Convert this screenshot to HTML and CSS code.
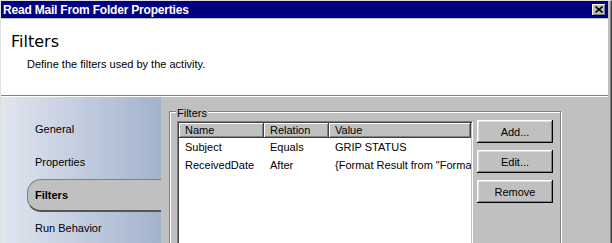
FILE: index.html
```html
<!DOCTYPE html>
<html lang="en">
<head>
  <meta charset="UTF-8">
  <title>Read Mail From Folder Properties</title>
  <link rel="stylesheet" href="styles.css">
</head>
<body>
  <div class="window">
    <div class="titlebar">
      <span class="title">Read Mail From Folder Properties</span>
      <button class="close" type="button" aria-label="Close">
        <svg width="8" height="7" viewBox="0 0 8 7"><path d="M0.5 0.5L7.5 6.5M7.5 0.5L0.5 6.5" stroke="#000" stroke-width="1.6" fill="none"/></svg>
      </button>
    </div>
    <div class="header">
      <h1>Filters</h1>
      <p>Define the filters used by the activity.</p>
    </div>
    <div class="main">
      <nav class="nav">
        <div class="nav-item">General</div>
        <div class="nav-item">Properties</div>
        <div class="nav-item selected">Filters</div>
        <div class="nav-item">Run Behavior</div>
      </nav>
      <div class="content">
        <fieldset class="group">
          <legend>Filters</legend>
          <div class="group-body">
            <div class="listview">
              <table>
                <colgroup><col class="c-name"><col class="c-rel"><col class="c-val"></colgroup>
                <thead>
                  <tr><th>Name</th><th>Relation</th><th>Value</th></tr>
                </thead>
                <tbody>
                  <tr><td>Subject</td><td>Equals</td><td>GRIP STATUS</td></tr>
                  <tr><td>ReceivedDate</td><td>After</td><td>{Format Result from "Format Text"}</td></tr>
                </tbody>
              </table>
            </div>
            <div class="buttons">
              <button type="button" class="btn">Add...</button>
              <button type="button" class="btn">Edit...</button>
              <button type="button" class="btn">Remove</button>
            </div>
          </div>
        </fieldset>
      </div>
    </div>
  </div>
</body>
</html>
```

FILE: styles.css
```css
/* base */
body { margin: 0; font-family: 'Liberation Sans', Arial, sans-serif; font-size: 11px; color: #000; background: #c0c0c0; }
.window { width: 612px; height: 243px; box-sizing: border-box; overflow: hidden; background: #c0c0c0; border-top: 1px solid #dfdfdf; border-left: 1px solid #dfdfdf; border-right: 1px solid #404040; padding-right: 3px; box-shadow: inset -1px 0 0 #808080; }

/* title bar */
.titlebar { height: 17px; background: #000080; display: flex; align-items: center; padding-left: 2px; border-bottom: 1px solid #c0c0c0; }
.title { color: #fff; font-weight: bold; font-size: 12px; letter-spacing: -0.2px; }
.close { margin-left: auto; margin-right: 2px; width: 14px; height: 12px; padding: 0; border: none; background: #c0c0c0; display: flex; align-items: center; justify-content: center; box-shadow: inset -1px -1px #000, inset 1px 1px #fff, inset -2px -2px #808080; }

/* header */
.header { height: 63px; background: #fff; padding: 13px 0 0 10px; border-bottom: 1px solid #808080; }
.header h1 { margin: 0; font-family: 'DejaVu Sans', sans-serif; font-size: 16px; line-height: 19px; font-weight: normal; }
.header p { margin: 7px 0 0 16px; line-height: 13px; }

/* body */
.main { display: flex; height: 146px; border-top: 1px solid #fff; }
.nav { width: 160px; flex-shrink: 0; padding-top: 16px; background: linear-gradient(to right, #e0e6f0, #a3b3cd); }
.nav-item { height: 33px; line-height: 33px; padding-left: 34px; }
.nav-item.selected { margin-left: 26px; padding-left: 7px; height: 33px; line-height: 30px; box-sizing: border-box; background: #c0c0c0; font-weight: bold; border: 1px solid #808080; border-right: none; border-bottom: 2px solid #555; border-radius: 14px 0 0 14px; }

.content { flex: 1; padding: 6px 0 0 8px; }
.group { width: 392px; height: 200px; box-sizing: border-box; margin: 0; padding: 0 7px 0 7px; border: 1px solid #808080; box-shadow: inset 1px 1px 0 #fff, 1px 1px 0 #fff; }
.group legend { padding: 4px 1px 0; margin-left: -1px; line-height: 13px; background: #c0c0c0; }
.group-body { display: flex; align-items: flex-start; }

/* list */
.listview { width: 296px; height: 140px; margin-top: 1px; box-sizing: border-box; background: #fff; overflow: hidden; border: 1px solid; border-color: #808080 #fff #fff #808080; box-shadow: inset 1px 1px 0 #404040, inset -1px -1px 0 #c0c0c0; padding: 1px; }
.listview table { width: 292px; table-layout: fixed; border-collapse: separate; border-spacing: 0; }
.c-name { width: 85px; }
.c-rel { width: 65px; }
.c-val { width: 142px; }
.listview th { height: 15px; box-sizing: border-box; padding: 1px 6px 0; line-height: 13px; font-weight: normal; text-align: left; background: #c0c0c0; border-right: 1px solid #404040; border-bottom: 1px solid #404040; box-shadow: inset 1px 1px #fff, inset -1px -1px #808080; white-space: nowrap; overflow: hidden; }
.listview td { height: 18px; padding: 0 6px; line-height: 18px; white-space: nowrap; overflow: hidden; }

/* buttons */
.buttons { display: flex; flex-direction: column; gap: 7px; margin-left: 4px; }
.btn { width: 76px; height: 23px; padding: 0; border: none; background: #c0c0c0; font-family: inherit; font-size: 11px; color: #000; box-shadow: inset -1px -1px #000, inset 1px 1px #fff, inset -2px -2px #808080, inset 2px 2px #dfdfdf; }
```
